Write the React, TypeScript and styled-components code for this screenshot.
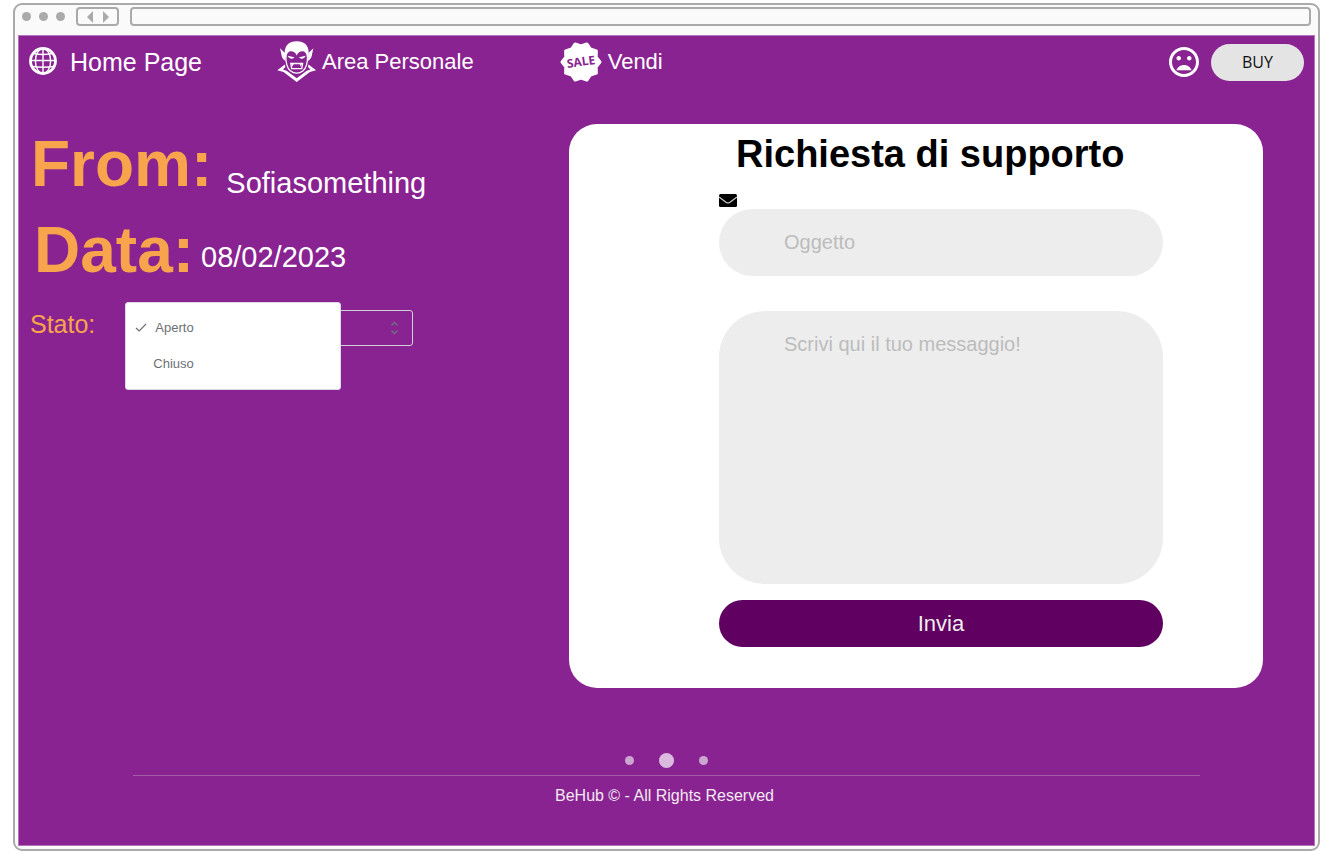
import React, { useState } from "react";
import styled, { createGlobalStyle } from "styled-components";
import { MdMoodBad } from "react-icons/md";

const purple = "#892391";
const orange = "#f7a44c";
const chrome = "#aaaaaa";

const GlobalStyle = createGlobalStyle`
  *, *::before, *::after { box-sizing: border-box; }
  body { margin: 0; background: #fff; font-family: "Liberation Sans", Arial, sans-serif; }
  button, input, textarea, select { font-family: inherit; margin: 0; }
  h1, h2, p, ul { margin: 0; padding: 0; }
  svg { display: block; flex: none; }
`;

const Page = styled.div`
  min-height: 100vh;
  display: flex;
  padding: 3px 10px 5px 13px;
`;

const BrowserFrame = styled.div`
  flex: 1;
  min-width: 0;
  display: flex;
  flex-direction: column;
  border: 2px solid ${chrome};
  border-radius: 9px;
  background: #fafafa;
  padding: 0 3px 3px;
`;

const BrowserBar = styled.div`
  display: flex;
  align-items: center;
  height: 30px;
  padding: 0 4px 7px;
`;

const WindowDots = styled.div`
  display: flex;
  gap: 8px;
  margin-right: 11px;
`;

const WindowDot = styled.span`
  width: 9px;
  height: 9px;
  border-radius: 50%;
  background: ${chrome};
`;

const HistoryBox = styled.div`
  display: flex;
  align-items: center;
  justify-content: center;
  gap: 8px;
  width: 43px;
  height: 19px;
  margin-right: 11px;
  border: 2px solid ${chrome};
  border-radius: 4px;
`;

const HistoryButton = styled.button`
  padding: 0;
  border: 0;
  background: none;
  color: ${chrome};
`;

const AddressInput = styled.input`
  flex: 1;
  min-width: 0;
  height: 19px;
  border: 2px solid ${chrome};
  border-radius: 4px;
  background: #fafafa;
`;

const Screen = styled.div`
  flex: 1;
  display: flex;
  flex-direction: column;
  background: ${purple};
  border: 1px solid #b673bc;
  color: #fff;
`;

const TopBar = styled.header`
  display: flex;
  align-items: center;
  justify-content: space-between;
  height: 52px;
  padding: 0 10px;
`;

const Nav = styled.nav`
  display: flex;
  align-items: center;
`;

const NavLink = styled.a<{ $size: number; $gap: number; $after?: number }>`
  display: flex;
  align-items: center;
  gap: ${(p) => p.$gap}px;
  margin-right: ${(p) => p.$after ?? 0}px;
  color: #fff;
  font-size: ${(p) => p.$size}px;
  line-height: 30px;
  text-decoration: none;
  white-space: nowrap;
`;

const Actions = styled.div`
  display: flex;
  align-items: center;
  gap: 9px;
`;

const IconButton = styled.button`
  padding: 0;
  border: 0;
  background: none;
  color: #fff;
`;

const BuyButton = styled.button`
  width: 93px;
  height: 37px;
  border: 0;
  border-radius: 19px;
  background: #e4e4e4;
  color: #111;
  font-family: "Open Sans", "Noto Sans", sans-serif;
  font-size: 16px;
`;

const Content = styled.main`
  display: grid;
  grid-template-columns: minmax(0, 539fr) minmax(0, 694fr);
  padding: 36px 51px 0 11px;
`;

const Details = styled.section`
  padding-top: 3px;
`;

const Field = styled.div<{ $height: number; $indent: number; $gap: number }>`
  display: flex;
  align-items: flex-start;
  gap: ${(p) => p.$gap}px;
  height: ${(p) => p.$height}px;
  padding-left: ${(p) => p.$indent}px;
`;

const FieldName = styled.h2`
  color: ${orange};
  font-size: 64px;
  line-height: 74px;
  font-weight: 700;
`;

const FieldValue = styled.p<{ $drop: number }>`
  font-size: 29px;
  line-height: 34px;
  padding-top: ${(p) => p.$drop}px;
`;

const StatusRow = styled.div`
  display: flex;
  align-items: center;
  gap: 30px;
`;

const StatusLabel = styled.label`
  color: ${orange};
  font-size: 25px;
  line-height: 30px;
  padding-bottom: 8px;
`;

const SelectWrap = styled.div`
  position: relative;
  display: flex;
  width: 288px;
  color: #6b7280;
`;

const StatusSelect = styled.select`
  appearance: none;
  width: 100%;
  height: 36px;
  border: 1px solid #d3cfd6;
  border-radius: 3px;
  background: transparent;
  color: transparent;
  font-size: 13px;
`;

const SelectArrows = styled.svg`
  position: absolute;
  right: 14px;
  top: 11px;
  pointer-events: none;
`;

const Menu = styled.ul`
  position: absolute;
  left: 0;
  top: -8px;
  width: 216px;
  padding: 6px 0 8px;
  border: 1px solid #d8d8e6;
  border-radius: 3px;
  background: #fff;
  list-style: none;
`;

const MenuItem = styled.li<{ $selected: boolean }>`
  display: flex;
  align-items: center;
  gap: 8px;
  height: 36px;
  padding-left: ${(p) => (p.$selected ? 9 : 27)}px;
  color: #6b7075;
  font-size: 13px;
  cursor: pointer;
`;

const Card = styled.form`
  display: flex;
  flex-direction: column;
  padding: 7px 100px 41px 150px;
  border-radius: 28px;
  background: #fff;
  color: #000;
`;

const CardTitle = styled.h1`
  padding-left: 17px;
  font-size: 38px;
  line-height: 46px;
  font-weight: 700;
  white-space: nowrap;
`;

const SubjectLabel = styled.label`
  display: flex;
  align-items: flex-end;
  height: 32px;
  padding-bottom: 1px;
`;

const SubjectInput = styled.input`
  width: 100%;
  height: 67px;
  margin-bottom: 35px;
  padding: 0 65px;
  border: 0;
  border-radius: 34px;
  background: #ededed;
  font-size: 20px;
  &::placeholder { color: #bcbcbc; opacity: 1; }
`;

const MessageInput = styled.textarea`
  display: block;
  width: 100%;
  height: 273px;
  margin-bottom: 16px;
  padding: 21px 65px;
  border: 0;
  border-radius: 46px;
  background: #ededed;
  font-size: 20px;
  line-height: 24px;
  resize: none;
  &::placeholder { color: #bcbcbc; opacity: 1; }
`;

const SendButton = styled.button`
  height: 47px;
  border: 0;
  border-radius: 24px;
  background: #600060;
  color: #eee;
  font-size: 22px;
`;

const Footer = styled.footer`
  display: flex;
  flex-direction: column;
  align-items: center;
  margin-top: auto;
  padding-bottom: 39px;
`;

const Pager = styled.div`
  display: flex;
  align-items: center;
  gap: 25px;
  height: 16px;
  margin-bottom: 7px;
`;

const PagerDot = styled.button<{ $active?: boolean }>`
  width: ${(p) => (p.$active ? 15 : 9)}px;
  height: ${(p) => (p.$active ? 15 : 9)}px;
  padding: 0;
  border: 0;
  border-radius: 50%;
  background: ${(p) => (p.$active ? "#dcb9df" : "#cda5d1")};
`;

const Copyright = styled.p`
  align-self: stretch;
  margin: 0 114px;
  padding: 10px 4px 0 0;
  border-top: 1px solid #a35ba6;
  color: #f4e9f5;
  font-size: 16px;
  line-height: 20px;
  text-align: center;
`;

const GlobeIcon = () => (
  <svg width="28" height="30" viewBox="0 0 28 30" fill="none" stroke="#fff" strokeWidth="1.4" aria-hidden="true">
    <circle cx="14" cy="14" r="12.5" strokeWidth="2.8" />
    <ellipse cx="14" cy="14" rx="7.6" ry="12.5" />
    <path d="M14 1.5v25M1.5 13.5h25M4.5 6.5q9.5 2 19 0M3 19.5q11 1.6 22 0" />
  </svg>
);

const VampireIcon = () => (
  <svg width="42" height="44" viewBox="0 0 42 44" fill="#fff" aria-hidden="true">
    <path d="M9 17C7.4 6.4 11.800 1.200 20.700 1.200S34 6.400 32.400 17l-1.400.5C30.600 13.500 29.200 11.200 26.400 11.200c-2.600 0-4.400 1.300-5.700 4.200-1.300-2.900-3.100-4.200-5.700-4.200-2.800 0-4.200 2.300-4.600 6.300z" />
    <path d="M4 8.300 9 13l.4 8C6.500 19.500 5.500 16.500 5.200 13.500zM37.400 8.300 32.400 13l-.4 8c2.900-1.500 3.900-4.500 4.200-7.500z" />
    <path d="M9.800 16c0 8.600 1.200 12 4.500 14.800q3 2.400 6.400 2.400t6.400-2.400c3.300-2.800 4.500-6.200 4.500-14.800" fill="none" stroke="#fff" strokeWidth="1.300" />
    <path d="M11.600 15.800 18.400 17.300q-.9 1.600-3 1.400-2.600-.2-3.800-2.900zM29.800 15.800 23 17.300q.9 1.600 3 1.400 2.600-.2 3.800-2.900z" />
    <path d="M14.800 23.500h11.800l-.8 5.100H15.600z" fill="none" stroke="#fff" strokeWidth="1.300" />
    <path d="M15.300 23.500h2.400l-1 3.200zM23.700 23.500h2.400l-1.400 3.200z" />
    <path d="M8.900 24.400 1.300 30.300l6.200 1.600 13.200 10 13.200-10 6.200-1.600-7.600-5.900-.5 2.600 2.400 2.600-3.600 1.200-10.100 7.400-10.100-7.400L7 29.600 9.400 27z" />
  </svg>
);

const badgePoints = Array.from({ length: 20 }, (_, i) => {
  const radius = i % 2 === 0 ? 19 : 16;
  const angle = ((i * 18 - 108) * Math.PI) / 180;
  return `${21 + radius * Math.cos(angle)},${21 + radius * Math.sin(angle)}`;
}).join(" ");

const SaleIcon = () => (
  <svg width="42" height="42" viewBox="0 0 42 42" aria-hidden="true">
    <polygon points={badgePoints} fill="#fff" stroke="#fff" strokeWidth="3" strokeLinejoin="round" />
    <text
      x="21"
      y="25"
      transform="rotate(-8 21 21)"
      textAnchor="middle"
      fill={purple}
      fontFamily="Open Sans, Noto Sans, sans-serif"
      fontSize="12"
      fontWeight="700"
    >
      SALE
    </text>
  </svg>
);

const EnvelopeIcon = () => (
  <svg width="18" height="14" viewBox="0 0 18 14" aria-hidden="true">
    <rect width="18" height="13" rx="1.5" fill="#000" />
    <path d="M0 3 7 8.300q2 1.400 4 0L18 3" fill="none" stroke="#c8c8c8" strokeWidth="1.300" />
  </svg>
);

const statuses = ["Aperto", "Chiuso"];

export default function App() {
  const [status, setStatus] = useState("Aperto");

  return (
    <>
      <GlobalStyle />
      <Page>
        <BrowserFrame>
          <BrowserBar>
            <WindowDots>
              <WindowDot />
              <WindowDot />
              <WindowDot />
            </WindowDots>
            <HistoryBox>
              <HistoryButton type="button" aria-label="Indietro">
                <svg width="8" height="12" viewBox="0 0 8 12"><path d="M7 0v12L1 6z" fill="currentColor" /></svg>
              </HistoryButton>
              <HistoryButton type="button" aria-label="Avanti">
                <svg width="8" height="12" viewBox="0 0 8 12"><path d="M1 0v12l6-6z" fill="currentColor" /></svg>
              </HistoryButton>
            </HistoryBox>
            <AddressInput type="text" aria-label="Indirizzo" />
          </BrowserBar>

          <Screen>
            <TopBar>
              <Nav>
                <NavLink href="#home" $size={25} $gap={13} $after={74}>
                  <GlobeIcon />
                  Home Page
                </NavLink>
                <NavLink href="#area" $size={22} $gap={4} $after={86}>
                  <VampireIcon />
                  Area Personale
                </NavLink>
                <NavLink href="#vendi" $size={22} $gap={6}>
                  <SaleIcon />
                  Vendi
                </NavLink>
              </Nav>
              <Actions>
                <IconButton type="button" aria-label="Supporto">
                  <MdMoodBad size={36} />
                </IconButton>
                <BuyButton type="button">BUY</BuyButton>
              </Actions>
            </TopBar>

            <Content>
              <Details>
                <Field $height={86} $indent={1} $gap={14}>
                  <FieldName>From:</FieldName>
                  <FieldValue $drop={39}>Sofiasomething</FieldValue>
                </Field>
                <Field $height={96} $indent={4} $gap={7}>
                  <FieldName>Data:</FieldName>
                  <FieldValue $drop={27}>08/02/2023</FieldValue>
                </Field>
                <StatusRow>
                  <StatusLabel htmlFor="status">Stato:</StatusLabel>
                  <SelectWrap>
                    <StatusSelect id="status" value={status} onChange={(e) => setStatus(e.target.value)}>
                      {statuses.map((s) => (
                        <option key={s}>{s}</option>
                      ))}
                    </StatusSelect>
                    <SelectArrows width="9" height="14" viewBox="0 0 9 14" fill="none" stroke="currentColor" strokeWidth="1.3">
                      <path d="M1.5 4.5l3-3 3 3M1.5 9.5l3 3 3-3" />
                    </SelectArrows>
                    <Menu role="listbox" aria-label="Stato">
                      {statuses.map((s) => (
                        <MenuItem
                          key={s}
                          role="option"
                          aria-selected={s === status}
                          $selected={s === status}
                          onClick={() => setStatus(s)}
                        >
                          {s === status && (
                            <svg width="12" height="12" viewBox="0 0 12 12" fill="none" stroke="currentColor" strokeWidth="1.2">
                              <path d="M1 7l3.2 3L11 3" />
                            </svg>
                          )}
                          {s}
                        </MenuItem>
                      ))}
                    </Menu>
                  </SelectWrap>
                </StatusRow>
              </Details>

              <Card onSubmit={(e) => e.preventDefault()}>
                <CardTitle>Richiesta di supporto</CardTitle>
                <SubjectLabel htmlFor="subject" aria-label="Oggetto">
                  <EnvelopeIcon />
                </SubjectLabel>
                <SubjectInput id="subject" type="text" placeholder="Oggetto" />
                <MessageInput aria-label="Messaggio" placeholder="Scrivi qui il tuo messaggio!" />
                <SendButton type="submit">Invia</SendButton>
              </Card>
            </Content>

            <Footer>
              <Pager>
                <PagerDot type="button" aria-label="Pagina 1" />
                <PagerDot type="button" aria-label="Pagina 2" $active />
                <PagerDot type="button" aria-label="Pagina 3" />
              </Pager>
              <Copyright>BeHub © - All Rights Reserved</Copyright>
            </Footer>
          </Screen>
        </BrowserFrame>
      </Page>
    </>
  );
}
